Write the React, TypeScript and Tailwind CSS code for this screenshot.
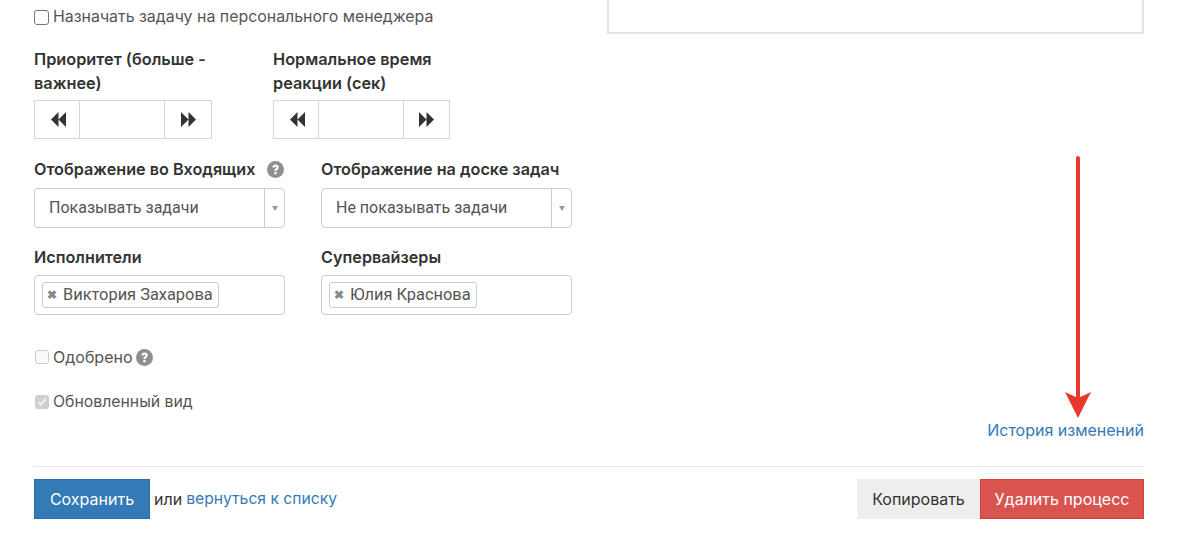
const labelFont = "font-['Inter',sans-serif]"

const Rewind = ({ flip }: { flip?: boolean }) => (
  <svg width="15" height="15" viewBox="0 0 15 15" className={flip ? "rotate-180" : ""} fill="#333">
    <path d="M7.5 0V15L0 7.5Z M15 0V15L7.5 7.5Z" />
  </svg>
)

const Help = ({ size = 17 }: { size?: number }) => (
  <svg width={size} height={size} viewBox="0 0 16 16">
    <circle cx="8" cy="8" r="8" fill="#8f8f8f" />
    <path d="M5 6.1C5.1 4.3 6.4 3.2 8.1 3.2C9.9 3.2 11.1 4.3 11.1 5.8C11.1 7.7 9.1 7.8 9.1 9.5H6.9C6.9 7 8.9 7 8.9 6C8.9 5.5 8.6 5.2 8 5.2C7.4 5.2 7.1 5.6 7 6.1Z M6.9 10.3H9.1V12.5H6.9Z" fill="#fff" />
  </svg>
)

const Stepper = ({ w, mid }: { w: string; mid: string }) => (
  <div className={`flex h-[39px] border-[1.5px] border-[#d6d6d6] ${w}`}>
    <div className="flex w-[44px] items-center justify-center pl-[3px]"><Rewind /></div>
    <div className={`h-full border-x-[1.5px] border-[#d6d6d6] ${mid}`}></div>
    <div className="flex flex-1 items-center justify-center"><Rewind flip /></div>
  </div>
)

const Select = ({ value, w }: { value: string; w: string }) => (
  <div className={`flex h-10 items-center rounded border border-[#cccccc] font-['Roboto',sans-serif] text-[16px] text-[#555555] ${w}`}>
    <span className="flex-1 pl-[14px]">{value}</span>
    <div className="flex h-full w-5 items-center justify-center border-l border-[#cccccc]">
      <div className="h-0 w-0 border-x-[3.5px] border-t-[5px] border-x-transparent border-t-[#999999]"></div>
    </div>
  </div>
)

const Tags = ({ value, w }: { value: string; w: string }) => (
  <div className={`flex h-10 items-center rounded border border-[#cccccc] pl-[7px] font-['Roboto',sans-serif] text-[16.4px] text-[#555555] ${w}`}>
    <div className="flex h-[26px] items-center gap-[6px] rounded-[3px] border border-[#cccccc] pl-[4px] pr-[5px]">
      <span className="text-[12px] font-bold leading-none text-[#888888]">✖</span>
      <span>{value}</span>
    </div>
  </div>
)

export default function App() {
  return (
    <div className={`flex h-[540px] w-[1200px] flex-col overflow-hidden bg-white pl-[34px] pr-[56px] ${labelFont} text-[16px] text-[#333333]`}>
      <div className="flex h-[466px] justify-between">
        <div className="w-[540px] pt-[7px]">
          <label className="flex h-5 items-center gap-1 text-[15.9px] text-[#555555]">
            <span className="h-[15px] w-[15px] rounded-[3px] border border-[#767676]"></span>
            Назначать задачу на персонального менеджера
          </label>

          <div className="mt-[20px] flex gap-[61px]">
            <div className="w-[178px]">
              <div className="text-[16.3px] font-semibold leading-6 text-[#333333]">Приоритет (больше - важнее)</div>
              <div className="mt-[5px]"><Stepper w="w-[178px]" mid="w-[86px]" /></div>
            </div>
            <div className="w-[177px]">
              <div className="text-[16.3px] font-semibold leading-6 text-[#333333]">Нормальное время реакции (сек)</div>
              <div className="mt-[5px]"><Stepper w="w-[177px]" mid="w-[86px]" /></div>
            </div>
          </div>

          <div className="mt-[20px] flex gap-[36px]">
            <div>
              <div className="flex h-5 items-center gap-[12px] text-[16.2px] font-semibold">Отображение во Входящих <Help /></div>
              <div className="mt-[9px]"><Select value="Показывать задачи" w="w-[251px]" /></div>
            </div>
            <div>
              <div className="flex h-5 items-center text-[16.2px] font-semibold">Отображение на доске задач</div>
              <div className="mt-[9px]"><Select value="Не показывать задачи" w="w-[251px]" /></div>
            </div>
          </div>

          <div className="mt-[19px] flex gap-[36px]">
            <div>
              <div className="flex h-5 items-center text-[16.2px] font-semibold">Исполнители</div>
              <div className="mt-2"><Tags value="Виктория Захарова" w="w-[251px]" /></div>
            </div>
            <div>
              <div className="flex h-5 items-center text-[16.2px] font-semibold">Супервайзеры</div>
              <div className="mt-2"><Tags value="Юлия Краснова" w="w-[251px]" /></div>
            </div>
          </div>

          <label className="mt-[32px] flex h-5 items-center gap-1 pl-px text-[#555555]">
            <span className="h-[14px] w-[14px] rounded-[3px] border border-[#cccccc] bg-[#fafafa]"></span>
            <span className="-mr-[1px]">Одобрено</span>
            <Help />
          </label>

          <label className="mt-[25px] flex h-5 items-center gap-1 pl-px text-[15.8px] text-[#555555]">
            <span className="flex h-[14px] w-[14px] items-center justify-center rounded-[3px] bg-[#cfcfcf]">
              <svg width="10" height="10" viewBox="0 0 10 10" fill="none" stroke="#f2f2f2" strokeWidth="2"><path d="M1.5 5L4 7.5L8.5 2" /></svg>
            </span>
            Обновленный вид
          </label>
        </div>

        <div className="relative flex w-[537px] flex-col items-end justify-between pb-6">
          <div className="h-[34px] w-full border-x-2 border-b-2 border-[#e4e4e4]"></div>
          <a className="text-[#337ab7]">История изменений</a>
          <svg className="absolute right-[46px] top-[155px]" width="40" height="265" viewBox="0 0 40 265">
            <path d="M20 3V245" stroke="#e8392f" strokeWidth="4" strokeLinecap="round" />
            <path d="M7 237L20 243L33 237L20 263Z" fill="#e8392f" />
          </svg>
        </div>
      </div>

      <div className="flex items-center justify-between border-t border-[#e8e8e8] pt-[12px]">
        <div className="flex items-center">
          <button className="h-10 w-[116px] border border-[#2e6da4] bg-[#337ab7] text-white">Сохранить</button>
          <span className="ml-[4px] text-[#333333]">или</span>
          <a className="ml-[4px] text-[15.7px] text-[#337ab7]">вернуться к списку</a>
        </div>
        <div className="flex">
          <button className="h-10 w-[123px] bg-[#eeeeee] text-[#333333]">Копировать</button>
          <button className="h-10 w-[164px] border border-[#d43f3a] bg-[#d9534f] text-white">Удалить процесс</button>
        </div>
      </div>
    </div>
  )
}
